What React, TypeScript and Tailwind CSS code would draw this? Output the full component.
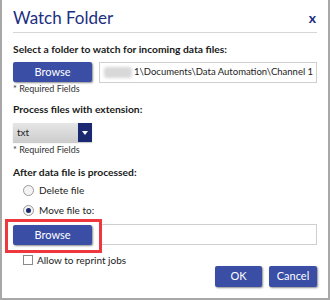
import type { ReactNode } from "react";

const font = { fontFamily: 'Lato, "Open Sans", sans-serif' };

function BlueButton({ children, className = "" }: { children: ReactNode; className?: string }) {
  return (
    <button
      className={[
        "flex items-center justify-center rounded-[2px] bg-[#3a4ea6] text-[11px] text-white shadow-[1px_1px_2px_rgba(0,0,0,0.45)]",
        className,
      ].join(" ")}
    >
      {children}
    </button>
  );
}

function Radio({ checked, label }: { checked?: boolean; label: string }) {
  return (
    <div className="flex h-[16px] items-center pl-[10px]">
      <span className="flex h-[11px] w-[11px] items-center justify-center rounded-full border border-[#9a9a9a] bg-[#f4f4f4]">
        {checked && <span className="h-[5px] w-[5px] rounded-full bg-[#1a2a6e]" />}
      </span>
      <span className="ml-[5px] text-[10px] leading-[16px] text-[#222]">{label}</span>
    </div>
  );
}

function Required({ className = "" }: { className?: string }) {
  return <div className={["h-[12px] text-[9px] leading-[12px] text-[#333]", className].join(" ")}>* Required Fields</div>;
}

export default function App() {
  return (
    <div
      className="flex h-[300px] w-[330px] flex-col border-x-2 border-b-2 border-[#a8a8a8] bg-white px-[11px]"
      style={font}
    >
      <div className="flex h-[32px] shrink-0 items-start justify-between pt-[8px]">
        <span className="text-[17px] leading-[20px] text-[#1c2f80]">Watch Folder</span>
        <span className="mr-[1px] text-[14px] font-bold leading-[20px] text-[#1c2f80]">x</span>
      </div>
      <div className="h-[1px] bg-[#d6d6d6]" />

      <div className="mt-[8px] whitespace-nowrap text-[10.3px] font-bold leading-[16px] text-[#1a1a1a]">
        Select a folder to watch for incoming data files:
      </div>
      <div className="mt-[5px] flex h-[20px] gap-[7px]">
        <BlueButton className="h-[20px] w-[79px] shrink-0">Browse</BlueButton>
        <div className="flex h-[21px] min-w-0 flex-1 items-center overflow-hidden whitespace-nowrap border border-[#cfcfcf] pl-[4px] text-[9.5px] text-[#222]">
          <span className="mr-[2px] h-[11px] w-[28px] shrink-0 rounded-[3px] bg-[#d8d8d8] blur-[1.5px]" />
          1\Documents\Data Automation\Channel 1
        </div>
      </div>
      <Required className="mt-[1px]" />

      <div className="mt-[6px] text-[10.3px] font-bold leading-[16px] text-[#1a1a1a]">Process files with extension:</div>
      <div className="mt-[6px] flex h-[19px] w-[79px] shadow-[0_1px_1px_rgba(0,0,0,0.2)]">
        <div className="flex flex-1 items-center bg-gradient-to-b from-[#e6e6e6] to-[#cdcdcd] pl-[4px] text-[10px] text-[#222]">
          txt
        </div>
        <div className="flex w-[14px] items-center justify-center bg-[#1b2a70]">
          <svg width="6" height="4" viewBox="0 0 6 4">
            <path d="M0 0h6L3 4z" fill="#fff" />
          </svg>
        </div>
      </div>
      <Required className="mt-[2px]" />

      <div className="mt-[8px] text-[10.3px] font-bold leading-[16px] text-[#1a1a1a]">After data file is processed:</div>
      <div className="mt-[2px]">
        <Radio label="Delete file" />
      </div>
      <div className="mt-[4px]">
        <Radio checked label="Move file to:" />
      </div>

      <div className="relative mt-[6px] flex h-[21px] gap-[7px]">
        <BlueButton className="mt-[1px] h-[20px] w-[79px] shrink-0">Browse</BlueButton>
        <div className="h-[21px] flex-1 border border-[#cfcfcf]" />
        <div className="absolute left-[-8px] top-[-5px] h-[34px] w-[97px] border-[3px] border-[#ee383d]" />
      </div>

      <div className="mt-[7px] flex items-start justify-between">
        <div className="flex h-[16px] items-center pl-[10px]">
          <span className="h-[10px] w-[10px] border border-[#8a8a8a] bg-white" />
          <span className="ml-[4px] text-[10px] leading-[16px] text-[#222]">Allow to reprint jobs</span>
        </div>
        <div className="mt-[14px] flex gap-[7px]">
          <BlueButton className="h-[21px] w-[47px]">OK</BlueButton>
          <BlueButton className="h-[21px] w-[48px]">Cancel</BlueButton>
        </div>
      </div>
    </div>
  );
}
